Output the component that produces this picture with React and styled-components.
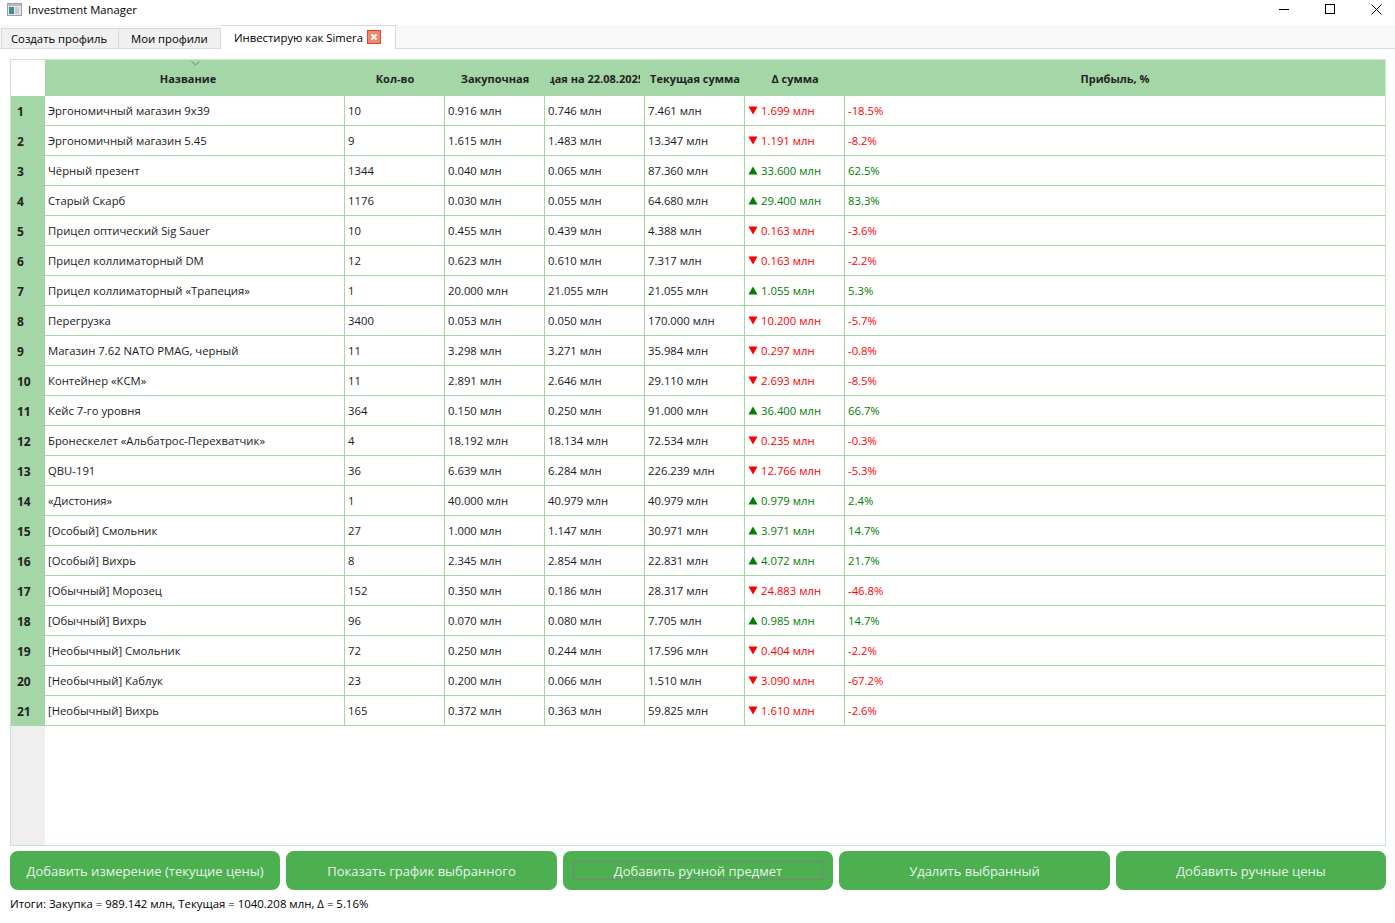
import React from "react";
import styled, { createGlobalStyle } from "styled-components";

const rows = [
  ["Эргономичный магазин 9x39","10","0.916 млн","0.746 млн","7.461 млн","1.699 млн","-18.5%",0],
  ["Эргономичный магазин 5.45","9","1.615 млн","1.483 млн","13.347 млн","1.191 млн","-8.2%",0],
  ["Чёрный презент","1344","0.040 млн","0.065 млн","87.360 млн","33.600 млн","62.5%",1],
  ["Старый Скарб","1176","0.030 млн","0.055 млн","64.680 млн","29.400 млн","83.3%",1],
  ["Прицел оптический Sig Sauer","10","0.455 млн","0.439 млн","4.388 млн","0.163 млн","-3.6%",0],
  ["Прицел коллиматорный DM","12","0.623 млн","0.610 млн","7.317 млн","0.163 млн","-2.2%",0],
  ["Прицел коллиматорный «Трапеция»","1","20.000 млн","21.055 млн","21.055 млн","1.055 млн","5.3%",1],
  ["Перегрузка","3400","0.053 млн","0.050 млн","170.000 млн","10.200 млн","-5.7%",0],
  ["Магазин 7.62 NATO PMAG, черный","11","3.298 млн","3.271 млн","35.984 млн","0.297 млн","-0.8%",0],
  ["Контейнер «КСМ»","11","2.891 млн","2.646 млн","29.110 млн","2.693 млн","-8.5%",0],
  ["Кейс 7-го уровня","364","0.150 млн","0.250 млн","91.000 млн","36.400 млн","66.7%",1],
  ["Бронескелет «Альбатрос-Перехватчик»","4","18.192 млн","18.134 млн","72.534 млн","0.235 млн","-0.3%",0],
  ["QBU-191","36","6.639 млн","6.284 млн","226.239 млн","12.766 млн","-5.3%",0],
  ["«Дистония»","1","40.000 млн","40.979 млн","40.979 млн","0.979 млн","2.4%",1],
  ["[Особый] Смольник","27","1.000 млн","1.147 млн","30.971 млн","3.971 млн","14.7%",1],
  ["[Особый] Вихрь","8","2.345 млн","2.854 млн","22.831 млн","4.072 млн","21.7%",1],
  ["[Обычный] Морозец","152","0.350 млн","0.186 млн","28.317 млн","24.883 млн","-46.8%",0],
  ["[Обычный] Вихрь","96","0.070 млн","0.080 млн","7.705 млн","0.985 млн","14.7%",1],
  ["[Необычный] Смольник","72","0.250 млн","0.244 млн","17.596 млн","0.404 млн","-2.2%",0],
  ["[Необычный] Каблук","23","0.200 млн","0.066 млн","1.510 млн","3.090 млн","-67.2%",0],
  ["[Необычный] Вихрь","165","0.372 млн","0.363 млн","59.825 млн","1.610 млн","-2.6%",0],
];
const headers = ["Название","Кол-во","Закупочная","Текущая на 22.08.2025","Текущая сумма","Δ сумма","Прибыль, %"];
const buttons = ["Добавить измерение (текущие цены)","Показать график выбранного","Добавить ручной предмет","Удалить выбранный","Добавить ручные цены"];
const COLS = "34px 300px 100px 100px 100px 100px 100px 1fr";
const GREEN = "#a5d6a7";

const Global = createGlobalStyle`
  html, body { margin: 0; padding: 0; background: #fff; }
  body { font-family: "Open Sans", "Noto Sans", sans-serif; font-size: 11.3px; color: #1a1a1a; }
`;
const Win = styled.div`width: 1395px; height: 923px; display: flex; flex-direction: column; overflow: hidden;`;
const TitleBar = styled.div`height: 25px; flex: none; display: flex; align-items: center; padding: 0 0 7px 7px; box-sizing: border-box;`;
const TitleText = styled.span`margin-left: 6px; color: #000;`;
const WinButtons = styled.div`margin-left: auto; margin-right: -4px; display: flex; align-items: center;`;
const WinBtn = styled.div`width: 46px; height: 18px; display: flex; align-items: center; justify-content: center;`;
const TabBar = styled.div`height: 24px; flex: none; background: #f8f8f8; border-bottom: 1px solid #d9d9d9; box-sizing: border-box; display: flex; align-items: flex-end; padding-left: 1px;`;
const Tab = styled.div`
  height: ${p => p.$active ? 24 : 20}px; box-sizing: border-box; flex: none;
  width: ${p => p.$w}px;
  margin-bottom: ${p => p.$active ? -1 : 0}px;
  padding: 0 0 ${p => p.$active ? 1 : 0}px ${p => p.$pad}px;
  display: flex; align-items: center; gap: 4px;
  background: ${p => p.$active ? "#fff" : "#f0f0f0"};
  border-top: 1px solid #d9d9d9;
  border-right: 1px solid #d9d9d9;
  border-left: ${p => p.$first ? "1px solid #d9d9d9" : "0"};
  color: #000;
`;
const Body = styled.div`flex: 1; display: flex; flex-direction: column; padding: 10px 9px 0 10px; min-height: 0;`;
const Table = styled.div`height: 787px; flex: none; border: 1px solid #c8e6c9; box-sizing: border-box; display: flex; flex-direction: column; background: #fff;`;
const HeadRow = styled.div`display: grid; grid-template-columns: ${COLS}; height: 36px; flex: none;`;
const Corner = styled.div`background: #fff;`;
const Head = styled.div`
  background: ${GREEN}; font-weight: 700; font-size: 11px; color: #222;
  padding: 1px ${p => p.$sorted ? "19px" : "5px"} 0 5px;
  display: flex; align-items: center; justify-content: center; position: relative; min-width: 0;
`;
const HeadClip = styled.div`overflow: hidden; width: 100%; display: flex; justify-content: center; white-space: nowrap;`;
const HeadText = styled.span`flex: none; padding-right: ${p => p.$trail}px;`;
const Chevron = styled.svg`position: absolute; top: 1px; left: 146px;`;
const Row = styled.div`display: grid; grid-template-columns: ${COLS}; height: 30px; flex: none;`;
const RowHead = styled.div`background: ${GREEN}; font-weight: 700; font-size: 12px; color: #222; padding-left: 6px; display: flex; align-items: center;`;
const Cell = styled.div`
  border-right: 1px solid ${GREEN}; border-bottom: 1px solid ${GREEN}; padding: 0 0 0 3px; box-sizing: border-box;
  display: flex; align-items: center; gap: 3px; white-space: nowrap; overflow: hidden; min-width: 0;
  color: ${p => p.$tone === 1 ? "#008000" : p.$tone === 0 ? "#ff0000" : "#1a1a1a"};
  &:last-child { border-right: 0; }
`;
const Filler = styled.div`flex: 1; display: grid; grid-template-columns: 34px 1fr;`;
const FillerSide = styled.div`background: #efefef;`;
const Buttons = styled.div`display: grid; grid-template-columns: repeat(5, 1fr); gap: 6.4px; margin-top: 5px; flex: none;`;
const Btn = styled.button`
  height: 39px; border: 0; border-radius: 8px; background: #4caf50; color: #e8f5e9; padding: 0;
  font-family: inherit; font-size: 13px; position: relative;
  ${p => p.$focus && `&::after { content: ""; position: absolute; inset: 10px; border: 1px dotted #a05ab0; }`}
`;
const Footer = styled.div`margin-top: 6px; font-size: 11.4px; color: #000;`;

const Triangle = ({ up }) => (
  <svg width="10" height="9" viewBox="0 0 10 9" style={{ flex: "none" }}>
    <path d={up ? "M5 0.5 L9.6 8.5 H0.4 Z" : "M0.4 0.5 H9.6 L5 8.5 Z"} fill={up ? "#008000" : "#ff0000"} />
  </svg>
);

export default function App() {
  return (
    <Win>
      <Global />
      <TitleBar>
        <svg width="15" height="13" viewBox="0 0 15 13">
          <rect x="0.5" y="0.5" width="14" height="12" fill="#e4e6ea" stroke="#9aa0a8" />
          <rect x="1" y="1" width="13" height="2" fill="#b4bac4" />
          <rect x="2" y="4" width="5" height="7" fill="#3d8f8c" />
          <rect x="8" y="4" width="4" height="7" fill="#c8ccd2" />
        </svg>
        <TitleText>Investment Manager</TitleText>
        <WinButtons>
          <WinBtn>
            <svg width="11" height="11" viewBox="0 0 11 11"><path d="M0 5.5 H10" stroke="#000" fill="none" /></svg>
          </WinBtn>
          <WinBtn>
            <svg width="11" height="11" viewBox="0 0 11 11"><rect x="0.5" y="0.5" width="9" height="9" stroke="#000" fill="none" /></svg>
          </WinBtn>
          <WinBtn>
            <svg width="11" height="11" viewBox="0 0 11 11"><path d="M0.5 0.5 L10.5 10.5 M10.5 0.5 L0.5 10.5" stroke="#000" fill="none" /></svg>
          </WinBtn>
        </WinButtons>
      </TitleBar>
      <TabBar>
        <Tab $first $w={118} $pad={9}>Создать профиль</Tab>
        <Tab $w={102} $pad={12}>Мои профили</Tab>
        <Tab $active $w={175} $pad={13}>
          Инвестирую как Simera
          <svg width="14" height="14" viewBox="0 0 14 14" style={{ flex: "none" }}>
            <rect x="0.5" y="0.5" width="13" height="13" fill="#ee8a68" stroke="#d9452f" />
            <path d="M4.5 4.5 L9.5 9.5 M9.5 4.5 L4.5 9.5" stroke="#fff" strokeWidth="1.8" />
          </svg>
        </Tab>
      </TabBar>
      <Body>
        <Table>
          <HeadRow>
            <Corner />
            {headers.map((h, i) => (
              <Head key={h} $sorted={i === 0}>
                {i === 0 && (
                  <Chevron width="9" height="5" viewBox="0 0 9 5">
                    <path d="M0.5 0.5 L4.5 4 L8.5 0.5" stroke="#6f8f70" fill="none" />
                  </Chevron>
                )}
                <HeadClip><HeadText $trail={i === 3 ? 28 : 0}>{h}</HeadText></HeadClip>
              </Head>
            ))}
          </HeadRow>
          {rows.map((r, i) => (
            <Row key={i}>
              <RowHead>{i + 1}</RowHead>
              <Cell>{r[0]}</Cell>
              <Cell>{r[1]}</Cell>
              <Cell>{r[2]}</Cell>
              <Cell>{r[3]}</Cell>
              <Cell>{r[4]}</Cell>
              <Cell $tone={r[7]}><Triangle up={r[7] === 1} />{r[5]}</Cell>
              <Cell $tone={r[7]}>{r[6]}</Cell>
            </Row>
          ))}
          <Filler><FillerSide /><div /></Filler>
        </Table>
        <Buttons>
          {buttons.map((b, i) => <Btn key={b} $focus={i === 2}>{b}</Btn>)}
        </Buttons>
        <Footer>Итоги: Закупка = 989.142 млн, Текущая = 1040.208 млн, Δ = 5.16%</Footer>
      </Body>
    </Win>
  );
}
